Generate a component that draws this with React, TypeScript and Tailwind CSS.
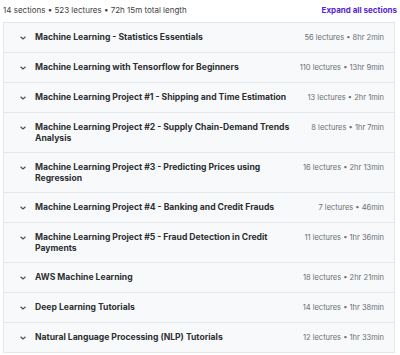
import React from "react";

const sections: [string, string][] = [
  ["Machine Learning - Statistics Essentials", "56 lectures • 8hr 2min"],
  ["Machine Learning with Tensorflow for Beginners", "110 lectures • 13hr 9min"],
  ["Machine Learning Project #1 - Shipping and Time Estimation", "13 lectures • 2hr 1min"],
  ["Machine Learning Project #2 - Supply Chain-Demand Trends Analysis", "8 lectures • 1hr 7min"],
  ["Machine Learning Project #3 - Predicting Prices using Regression", "16 lectures • 2hr 13min"],
  ["Machine Learning Project #4 - Banking and Credit Frauds", "7 lectures • 46min"],
  ["Machine Learning Project #5 - Fraud Detection in Credit Payments", "11 lectures • 1hr 36min"],
  ["AWS Machine Learning", "18 lectures • 2hr 21min"],
  ["Deep Learning Tutorials", "14 lectures • 1hr 38min"],
  ["Natural Language Processing (NLP) Tutorials", "12 lectures • 1hr 33min"],
];

function Chevron() {
  return (
    <svg width="8" height="8" viewBox="0 0 8 8" className="shrink-0">
      <path d="M1.8 3 L4 5 L6.2 3" fill="none" stroke="#4a4d50" strokeWidth="1.1" strokeLinecap="round" strokeLinejoin="round" />
    </svg>
  );
}

export default function App() {
  return (
    <div className="w-[400px] h-[355px] bg-white overflow-hidden" style={{ fontFamily: "Inter, 'Noto Sans', sans-serif" }}>
      <div className="flex items-center justify-between pl-[3px] pr-[3px] h-[22px] pb-[2px]">
        <span className="text-[8px] text-[#3e4143]">14 sections • 523 lectures • 72h 15m total length</span>
        <span className="text-[8px] font-bold text-[#5624d0]">Expand all sections</span>
      </div>
      <div className="ml-[3px] w-[392px] border border-[#e4e7ea]">
        {sections.map(([title, meta], i) => (
          <div
            key={i}
            className={`flex items-start bg-[#f7f9fa] pl-[15px] pr-[10px] py-[9px] ${i > 0 ? "border-t border-[#e4e7ea]" : ""}`}
          >
            <div className="h-[11px] flex items-center w-[16px]">
              <Chevron />
            </div>
            <div className="flex-1 text-[8.6px] leading-[10.5px] font-bold text-[#2d2f31] pr-[4px]">{title}</div>
            <div className="text-[7.5px] leading-[11px] text-[#6a6f73] whitespace-nowrap">{meta}</div>
          </div>
        ))}
      </div>
    </div>
  );
}
